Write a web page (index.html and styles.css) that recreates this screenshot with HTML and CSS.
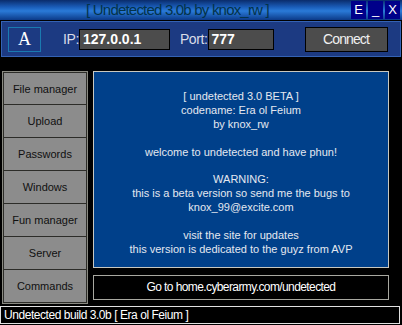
FILE: index.html
```html
<!DOCTYPE html>
<html lang="en">
<head>
    <meta charset="UTF-8">
    <title>Undetected 3.0b</title>
    <link rel="stylesheet" href="styles.css">
</head>
<body>
    <div id="window">
        <!-- title bar -->
        <div class="titlebar">
            <div class="title">[ Undetected 3.0b by knox_rw ]</div>
            <div class="winbtn">E</div>
            <div class="winbtn">_</div>
            <div class="winbtn">X</div>
        </div>

        <!-- connection bar -->
        <div class="connbar">
            <div class="logo">A</div>
            <label class="lbl ip-lbl">IP:</label>
            <div class="field ip-field">127.0.0.1</div>
            <label class="lbl port-lbl">Port:</label>
            <div class="field port-field">777</div>
            <button class="connect">Connect</button>
        </div>

        <div class="main">
            <div class="nav">
                <button>File manager</button>
                <button>Upload</button>
                <button>Passwords</button>
                <button>Windows</button>
                <button>Fun manager</button>
                <button>Server</button>
                <button>Commands</button>
            </div>
            <div class="content">
                <div class="info">
                    [ undetected 3.0 BETA ]<br>
                    codename: Era ol Feium<br>
                    by knox_rw<br>
                    <br>
                    welcome to undetected and have phun!<br>
                    <br>
                    WARNING:<br>
                    this is a beta version so send me the bugs to<br>
                    knox_99@excite.com<br>
                    <br>
                    visit the site for updates<br>
                    this version is dedicated to the guyz from AVP
                </div>
                <div class="goto">Go to home.cyberarmy.com/undetected</div>
            </div>
        </div>

        <div class="status">Undetected build 3.0b [ Era ol Feium ]</div>
    </div>
</body>
</html>
```

FILE: styles.css
```css
body {
    margin: 0;
    background-color: #000;
    font-family: "Liberation Sans", Arial, sans-serif;
    width: 402px;
    height: 325px;
    overflow: hidden;
}
.titlebar {
    display: flex;
    height: 20px;
    background: linear-gradient(#0a2c6c, #1a5cb8 35%, #2a7ad8 55%, #0c3a88);
}
.title {
    flex: 1;
    text-align: center;
    color: #03334a;
    font-size: 15px;
    letter-spacing: -0.8px;
    line-height: 20px;
    padding-left: 4px;
}
.winbtn {
    width: 15px;
    height: 18px;
    margin: 1px 2px 1px 0;
    background-color: #00008a;
    color: #fff;
    font-size: 13px;
    line-height: 18px;
    text-align: center;
}
.connbar {
    display: flex;
    align-items: center;
    height: 34px;
    margin: 1px 1px 0 1px;
    border: 1px solid #3462b4;
    background-color: #1c3a82;
}
.logo {
    width: 31px;
    height: 23px;
    margin-left: 6px;
    border: 1px solid #1a7ab0;
    color: #fff;
    font-family: "Liberation Serif", serif;
    font-size: 18px;
    line-height: 23px;
    text-align: center;
}
.lbl {
    color: #d8dce8;
    font-size: 14px;
    letter-spacing: -0.4px;
}
.ip-lbl {
    margin-left: 22px;
}
.port-lbl {
    margin-left: 10px;
}
.field {
    height: 19px;
    border: 1px solid #000;
    background-color: #4c4c4c;
    color: #fff;
    font-weight: bold;
    font-size: 14px;
    line-height: 19px;
    padding-left: 3px;
}
.ip-field {
    width: 86px;
}
.port-field {
    width: 61px;
}
.connect {
    width: 83px;
    height: 25px;
    margin-left: 31px;
    border: 1px solid #000;
    background-color: #4c4c4c;
    color: #f0f0f0;
    font-family: "Liberation Sans", Arial, sans-serif;
    font-size: 14px;
    letter-spacing: -0.9px;
    padding: 0;
}
.main {
    display: flex;
    margin-top: 14px;
    height: 234px;
}
.nav {
    display: flex;
    flex-direction: column;
    width: 84px;
    height: 231px;
    margin-left: 2px;
    border: 1px solid #8a8a82;
}
.nav button {
    height: 33px;
    border: 1px solid #2c2c28;
    border-top: 0;
    background-color: #8c8c8c;
    color: #101010;
    font-family: "Liberation Sans", Arial, sans-serif;
    font-size: 11px;
    padding: 0;
}
.nav button:first-child {
    border-top: 1px solid #2c2c28;
}
.content {
    display: flex;
    flex-direction: column;
    width: 296px;
    margin-left: 5px;
}
.info {
    border: 1px solid #c8c8c0;
    background-color: #00408a;
    color: #e4e8f0;
    font-size: 11px;
    line-height: 13.9px;
    text-align: center;
    padding-top: 18px;
    box-sizing: border-box;
    height: 197px;
}
.goto {
    height: 23px;
    margin-top: 7px;
    border: 1px solid #a8a8a0;
    color: #fff;
    font-size: 12px;
    letter-spacing: -0.6px;
    line-height: 23px;
    text-align: center;
}
.status {
    height: 16px;
    margin: 1px 2px 0 0;
    border: 1px solid #e0e0e0;
    color: #fff;
    font-size: 12px;
    letter-spacing: -0.45px;
    line-height: 16px;
    padding-left: 3px;
}
```
